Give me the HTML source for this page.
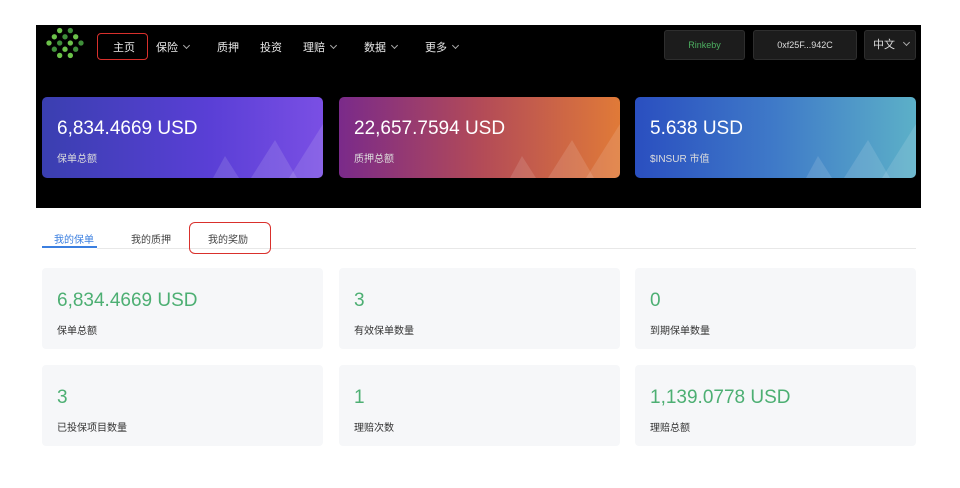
<!DOCTYPE html>
<html><head><meta charset="utf-8"><style>
*{margin:0;padding:0;box-sizing:border-box}
body{width:960px;height:488px;background:#fff;position:relative;overflow:hidden;font-family:"Liberation Sans","Noto Sans CJK SC",sans-serif}
.a{position:absolute}
.hdr{left:36px;top:25px;width:885px;height:183px;background:#000}
.nav{color:#e8e8e8;font-size:11px;top:39px}
.chev{display:inline-block;width:5px;height:5px;border-right:1px solid #aaa;border-bottom:1px solid #aaa;transform:rotate(45deg);margin-left:6px;position:relative;top:-3px}
.btn{top:30px;height:30px;background:#1c1c1c;border:1px solid #2e2e2e;border-radius:3px;font-size:9px;color:#ddd;text-align:center;line-height:28px}
.card{top:97px;width:281px;height:81px;border-radius:5px;overflow:hidden}
.card .v{position:absolute;left:15px;top:21px;color:#fff;font-size:19px}
.card .l{position:absolute;left:15px;top:53px;color:#ddd;font-size:10px}
.card svg{position:absolute;right:0;bottom:0}
.sc{width:281px;height:81px;background:#f6f7f9;border-radius:4px}
.sc .v{position:absolute;left:15px;top:22px;color:#4daf73;font-size:19px}
.sc .l{position:absolute;left:15px;top:54px;color:#333;font-size:10px}
.tab{top:231px;font-size:10px;color:#444}
</style></head><body>
<div class="a hdr"></div>
<svg class="a" style="left:41px;top:27px" width="48" height="32" viewBox="0 0 50 36">
<g fill="#6cc24a">
<circle cx="19" cy="4" r="3"/><circle cx="31" cy="4" r="3" fill="#3f8f3a"/>
<circle cx="13" cy="11" r="3"/><circle cx="25" cy="11" r="3" fill="#3f8f3a"/><circle cx="37" cy="11" r="3"/>
<circle cx="7" cy="18" r="3"/><circle cx="19" cy="18" r="3" fill="#3f8f3a"/><circle cx="31" cy="18" r="3"/><circle cx="43" cy="18" r="3" fill="#3f8f3a"/>
<circle cx="13" cy="25" r="3" fill="#3f8f3a"/><circle cx="25" cy="25" r="3"/><circle cx="37" cy="25" r="3" fill="#3f8f3a"/>
<circle cx="19" cy="32" r="3"/><circle cx="31" cy="32" r="3"/>
</g></svg>
<div class="a" style="left:97px;top:33px;width:51px;height:27px;border:1.5px solid #d9302c;border-radius:4px"></div>
<div class="a nav" style="left:113px">主页</div>
<div class="a nav" style="left:156px">保险<span class="chev"></span></div>
<div class="a nav" style="left:217px">质押</div>
<div class="a nav" style="left:260px">投资</div>
<div class="a nav" style="left:303px">理赔<span class="chev"></span></div>
<div class="a nav" style="left:364px">数据<span class="chev"></span></div>
<div class="a nav" style="left:425px">更多<span class="chev"></span></div>
<div class="a btn" style="left:664px;width:81px;color:#4caf60">Rinkeby</div>
<div class="a btn" style="left:753px;width:104px">0xf25F...942C</div>
<div class="a btn" style="left:864px;width:52px;font-size:11px;text-align:left;padding-left:8px">中文<span class="chev" style="margin-left:9px"></span></div>

<div class="a card" style="left:42px;background:linear-gradient(90deg,#3a3fb0,#5a3fd6 60%,#7a4fe4)"><svg width="130" height="60"><g fill="rgba(255,255,255,.12)"><polygon points="20,60 32,38 46,60"/><polygon points="58,60 82,22 104,60"/><polygon points="96,60 130,6 130,60"/></g></svg><div class="v">6,834.4669 USD</div><div class="l">保单总额</div></div>
<div class="a card" style="left:339px;background:linear-gradient(90deg,#7a2a8a,#b24a58 50%,#e07a38)"><svg width="130" height="60"><g fill="rgba(255,255,255,.12)"><polygon points="20,60 32,38 46,60"/><polygon points="58,60 82,22 104,60"/><polygon points="96,60 130,6 130,60"/></g></svg><div class="v">22,657.7594 USD</div><div class="l">质押总额</div></div>
<div class="a card" style="left:635px;background:linear-gradient(90deg,#2a4fc0,#3f7ac8 50%,#5cb0c8)"><svg width="130" height="60"><g fill="rgba(255,255,255,.12)"><polygon points="20,60 32,38 46,60"/><polygon points="58,60 82,22 104,60"/><polygon points="96,60 130,6 130,60"/></g></svg><div class="v">5.638 USD</div><div class="l">$INSUR 市值</div></div>

<div class="a tab" style="left:54px;color:#3b7fe0">我的保单</div>
<div class="a" style="left:42px;top:246px;width:55px;height:2px;background:#3b7fe0"></div>
<div class="a tab" style="left:131px">我的质押</div>
<div class="a tab" style="left:208px">我的奖励</div>
<div class="a" style="left:97px;top:248px;width:819px;height:1px;background:#e8e8e8"></div>
<div class="a" style="left:189px;top:222px;width:82px;height:32px;border:1.5px solid #d9302c;border-radius:6px"></div>

<div class="a sc" style="left:42px;top:268px"><div class="v">6,834.4669 USD</div><div class="l">保单总额</div></div>
<div class="a sc" style="left:339px;top:268px"><div class="v">3</div><div class="l">有效保单数量</div></div>
<div class="a sc" style="left:635px;top:268px"><div class="v">0</div><div class="l">到期保单数量</div></div>
<div class="a sc" style="left:42px;top:365px"><div class="v">3</div><div class="l">已投保项目数量</div></div>
<div class="a sc" style="left:339px;top:365px"><div class="v">1</div><div class="l">理赔次数</div></div>
<div class="a sc" style="left:635px;top:365px"><div class="v">1,139.0778 USD</div><div class="l">理赔总额</div></div>
</body></html>
